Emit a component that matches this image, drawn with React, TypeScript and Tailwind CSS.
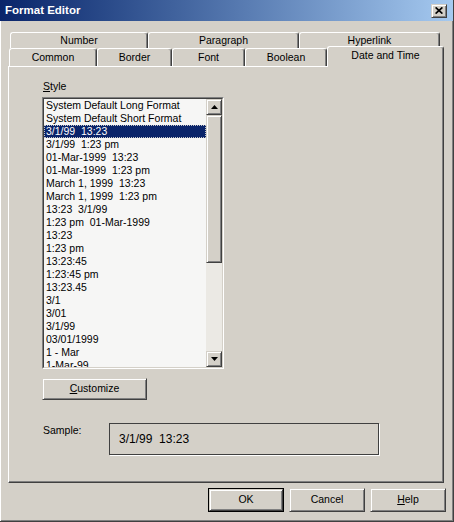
import React from "react";

const items = [
  "System Default Long Format",
  "System Default Short Format",
  "3/1/99  13:23",
  "3/1/99  1:23 pm",
  "01-Mar-1999  13:23",
  "01-Mar-1999  1:23 pm",
  "March 1, 1999  13:23",
  "March 1, 1999  1:23 pm",
  "13:23  3/1/99",
  "1:23 pm  01-Mar-1999",
  "13:23",
  "1:23 pm",
  "13:23:45",
  "1:23:45 pm",
  "13:23.45",
  "3/1",
  "3/01",
  "3/1/99",
  "03/01/1999",
  "1 - Mar",
  "1-Mar-99",
];

const raised =
  "border border-t-[#d4d0c8] border-l-[#d4d0c8] border-r-[#404040] border-b-[#404040] shadow-[inset_1px_1px_#ffffff,inset_-1px_-1px_#808080]";

function Tab({ w, label }: { w: string; label: string }) {
  return (
    <div
      className={`${w} h-full flex items-center justify-center border-t border-l border-r border-t-white border-l-white border-r-[#404040] rounded-t-[3px] shadow-[inset_-1px_0_#808080] bg-[#d4d0c8] pt-[1px]`}
    >
      {label}
    </div>
  );
}

function Arrow({ down }: { down?: boolean }) {
  return (
    <svg width="7" height="4" viewBox="0 0 7 4">
      {down ? <polygon points="0,0 7,0 3.5,4" fill="#000" /> : <polygon points="0,4 7,4 3.5,0" fill="#000" />}
    </svg>
  );
}

export default function App() {
  return (
    <div className="w-[454px] h-[522px] bg-[#d4d0c8] flex flex-col font-['Liberation_Sans',Arial,sans-serif] text-[10.5px] text-black overflow-hidden border-r border-b border-r-[#404040] border-b-[#404040] shadow-[inset_1px_0_#ffffff,inset_-1px_-1px_#808080]">
      {/* Title bar */}
      <div className="h-[21px] shrink-0 flex items-center pl-[5px] pr-[6px] bg-linear-to-r from-[#0a246a] to-[#a6caf0]">
        <span className="text-white font-bold text-[11.5px] leading-none">Format Editor</span>
        <div className={`ml-auto w-[16px] h-[14px] bg-[#d4d0c8] flex items-center justify-center ${raised}`}>
          <svg width="8" height="7" viewBox="0 0 8 7">
            <path d="M0.6 0.4 L7.4 6.6 M7.4 0.4 L0.6 6.6" stroke="#000" strokeWidth="1.7" />
          </svg>
        </div>
      </div>

      {/* Tabs row 1 */}
      <div className="mt-[11px] ml-[10px] h-[16px] flex shrink-0">
        <Tab w="w-[138px]" label="Number" />
        <Tab w="w-[151px]" label="Paragraph" />
        <Tab w="w-[141px]" label="Hyperlink" />
      </div>

      {/* Tabs row 2 */}
      <div className="ml-[9px] h-[18px] flex shrink-0 relative z-10">
        <Tab w="w-[88px]" label="Common" />
        <Tab w="w-[75px]" label="Border" />
        <Tab w="w-[73px]" label="Font" />
        <Tab w="w-[82px]" label="Boolean" />
        <div className="w-[117px] h-[21px] -mt-[2px] flex items-center justify-center border-t border-l border-r border-t-white border-l-white border-r-[#404040] rounded-t-[3px] shadow-[inset_-1px_0_#808080] bg-[#d4d0c8] pb-[2px]">
          Date and Time
        </div>
      </div>

      {/* Panel */}
      <div className="ml-[8px] w-[436px] h-[417px] shrink-0 border border-t-white border-l-white border-r-[#404040] border-b-[#404040] shadow-[inset_-1px_-1px_#808080] pl-[33px] pt-[13px] flex flex-col items-start">
        <div className="ml-[1px] h-[13px] leading-[13px]">
          <span className="underline underline-offset-[1px]">S</span>tyle
        </div>

        {/* List box */}
        <div className="mt-[4px] w-[182px] h-[272px] border border-t-[#808080] border-l-[#808080] border-r-white border-b-white">
          <div className="w-full h-full border border-t-[#404040] border-l-[#404040] border-r-[#d4d0c8] border-b-[#d4d0c8] flex">
            <div className="flex-1 bg-[#f6f6f5] overflow-hidden flex flex-col">
              {items.map((it, i) => (
                <div
                  key={i}
                  className={`h-[13px] shrink-0 leading-[13px] px-[2px] whitespace-pre ${
                    i === 2
                      ? "bg-[#0a246a] text-white outline-1 outline-dotted outline-[#c8c8c8] -outline-offset-1"
                      : ""
                  }`}
                >
                  {it}
                </div>
              ))}
            </div>
            <div className="w-[16px] flex flex-col">
              <div className={`h-[16px] shrink-0 bg-[#d4d0c8] flex items-center justify-center ${raised}`}>
                <Arrow />
              </div>
              <div className={`h-[148px] shrink-0 bg-[#d4d0c8] ${raised}`} />
              <div className="flex-1 bg-[#ebe9e4]" />
              <div className={`h-[16px] shrink-0 bg-[#d4d0c8] flex items-center justify-center ${raised}`}>
                <Arrow down />
              </div>
            </div>
          </div>
        </div>

        {/* Customize */}
        <div className={`mt-[9px] w-[105px] h-[22px] flex items-center justify-center ${raised}`}>
          <span>
            <span className="underline underline-offset-[1px]">C</span>ustomize
          </span>
        </div>

        {/* Sample */}
        <div className="mt-[23px] ml-[1px] flex items-start">
          <div className="w-[66px] mt-[1px] leading-[13px]">Sample:</div>
          <div className="w-[270px] h-[32px] border border-[#404040] shadow-[1px_1px_0_#ffffff] flex items-center pl-[9px] whitespace-pre text-[12px]">
            3/1/99  13:23
          </div>
        </div>
      </div>

      {/* Buttons */}
      <div className="mt-[5px] flex justify-end gap-[5px] pr-[7px]">
        <div className="w-[76px] h-[24px] border border-black">
          <div className={`w-full h-full flex items-center justify-center ${raised}`}>OK</div>
        </div>
        <div className={`w-[76px] h-[24px] flex items-center justify-center ${raised}`}>Cancel</div>
        <div className={`w-[76px] h-[24px] flex items-center justify-center ${raised}`}>
          <span>
            <span className="underline underline-offset-[1px]">H</span>elp
          </span>
        </div>
      </div>
    </div>
  );
}
